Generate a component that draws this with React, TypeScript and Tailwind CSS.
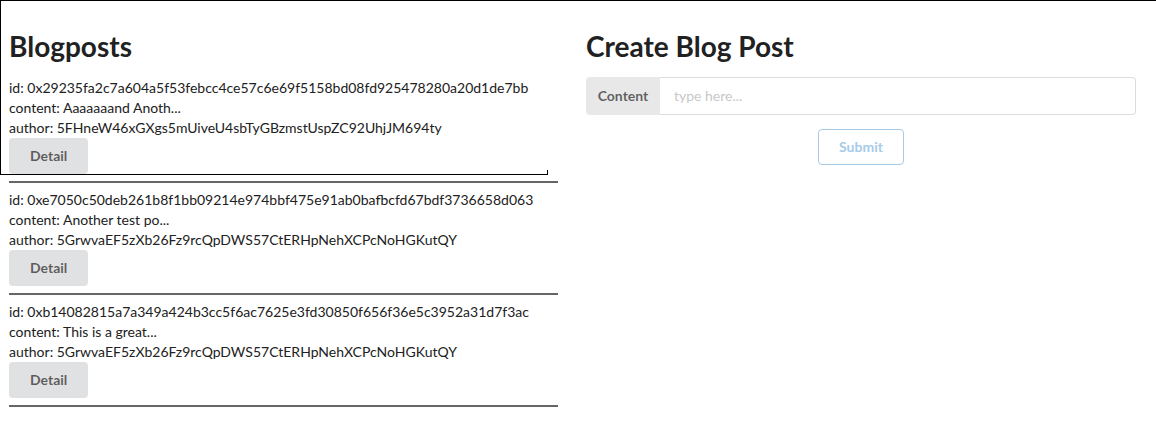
import React from 'react';

interface Post {
  id: string;
  content: string;
  author: string;
}

const posts: Post[] = [
  {
    id: '0x29235fa2c7a604a5f53febcc4ce57c6e69f5158bd08fd925478280a20d1de7bb',
    content: 'Aaaaaaand Anoth...',
    author: '5FHneW46xGXgs5mUiveU4sbTyGBzmstUspZC92UhjJM694ty',
  },
  {
    id: '0xe7050c50deb261b8f1bb09214e974bbf475e91ab0bafbcfd67bdf3736658d063',
    content: 'Another test po...',
    author: '5GrwvaEF5zXb26Fz9rcQpDWS57CtERHpNehXCPcNoHGKutQY',
  },
  {
    id: '0xb14082815a7a349a424b3cc5f6ac7625e3fd30850f656f36e5c3952a31d7f3ac',
    content: 'This is a great...',
    author: '5GrwvaEF5zXb26Fz9rcQpDWS57CtERHpNehXCPcNoHGKutQY',
  },
];

export default function App() {
  const [content, setContent] = React.useState('');

  return (
    <div
      className="relative min-h-[421px] bg-white text-[14px] leading-[20px] text-[#212121]"
      style={{ fontFamily: 'Lato, "Open Sans", sans-serif' }}
    >
      {/* focus outline left over on the page */}
      <div className="absolute top-0 left-0 w-full h-px bg-black" />
      <div className="absolute top-0 left-0 w-[548px] h-[175px] border-l border-b border-black" />
      <div className="absolute top-[170px] left-[547px] w-px h-[5px] bg-black" />

      <div className="flex pl-[9px] pt-[28px]">
        <div className="w-[549px]">
          <h1 className="text-[28px] leading-[36px] font-bold mb-[14px]">Blogposts</h1>
          {posts.map((p) => (
            <div key={p.id}>
              <div>id: {p.id}</div>
              <div>content: {p.content}</div>
              <div>author: {p.author}</div>
              <button className="h-[36px] px-[21px] rounded-[4px] bg-[#e0e1e2] text-[14px] font-bold text-black/60">
                Detail
              </button>
              <div className="my-[7px] h-[2px] bg-[#666666]" />
            </div>
          ))}
        </div>

        <div className="w-[550px] ml-[28px]">
          <h1 className="text-[28px] leading-[36px] font-bold mb-[13px]">Create Blog Post</h1>
          <div className="flex h-[38px]">
            <div className="flex items-center w-[74px] justify-center rounded-l-[4px] bg-[#e8e8e8] font-bold text-black/60">
              Content
            </div>
            <input
              className="flex-1 border border-[#dcdcdc] border-l-0 rounded-r-[4px] px-[14px] outline-none placeholder:text-[#c8c8c8]"
              placeholder="type here..."
              value={content}
              onChange={(e) => setContent(e.target.value)}
            />
          </div>
          <div className="flex justify-center mt-[14px]">
            <button
              disabled
              className="h-[36px] w-[86px] rounded-[4px] border border-[#a6cbe9] bg-white font-bold text-[#a6cbe9]"
            >
              Submit
            </button>
          </div>
        </div>
      </div>
    </div>
  );
}
